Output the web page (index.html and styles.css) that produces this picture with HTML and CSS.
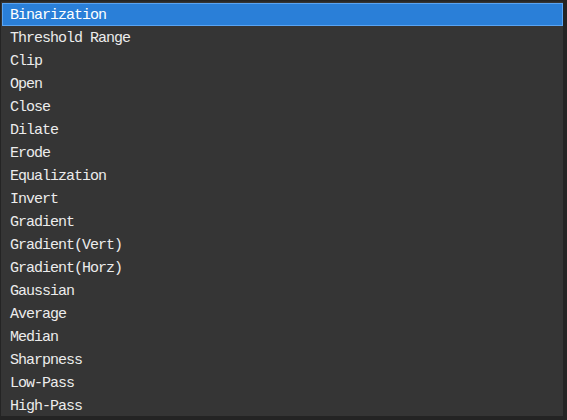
FILE: index.html
```html
<!DOCTYPE html>
<html>
<head>
<meta charset="utf-8">
<link rel="stylesheet" href="styles.css">
</head>
<body>
<div class="frame">
  <ul class="list">
    <li class="item selected">Binarization</li>
    <li class="item">Threshold Range</li>
    <li class="item">Clip</li>
    <li class="item">Open</li>
    <li class="item">Close</li>
    <li class="item">Dilate</li>
    <li class="item">Erode</li>
    <li class="item">Equalization</li>
    <li class="item">Invert</li>
    <li class="item">Gradient</li>
    <li class="item">Gradient(Vert)</li>
    <li class="item">Gradient(Horz)</li>
    <li class="item">Gaussian</li>
    <li class="item">Average</li>
    <li class="item">Median</li>
    <li class="item">Sharpness</li>
    <li class="item">Low-Pass</li>
    <li class="item">High-Pass</li>
  </ul>
</div>
</body>
</html>
```
FILE: styles.css
```css
html, body {
  margin: 0;
  padding: 0;
  background: #262626;
}
.frame {
  width: 567px;
  height: 420px;
  box-sizing: border-box;
  padding: 1px 4px 4px 1px;
  background: #242424;
}
.list {
  list-style: none;
  margin: 0;
  padding: 1px 0 0 1px;
  height: 100%;
  box-sizing: border-box;
  background: #353535;
  border-top: 1px solid #2a2a2a;
}
.item {
  height: 23px;
  line-height: 23px;
  padding-top: 1px;
  box-sizing: border-box;
  padding-left: 8px;
  font-family: "Liberation Mono", "DejaVu Sans Mono", monospace;
  font-size: 15px;
  letter-spacing: -1px;
  color: #ececec;
  white-space: nowrap;
}
.selected {
  background: #2a7fd8;
  border: 1px solid #5aa4f2;
  line-height: 21px;
  padding-top: 1px;
  padding-left: 7px;
  color: #ffffff;
}
```
